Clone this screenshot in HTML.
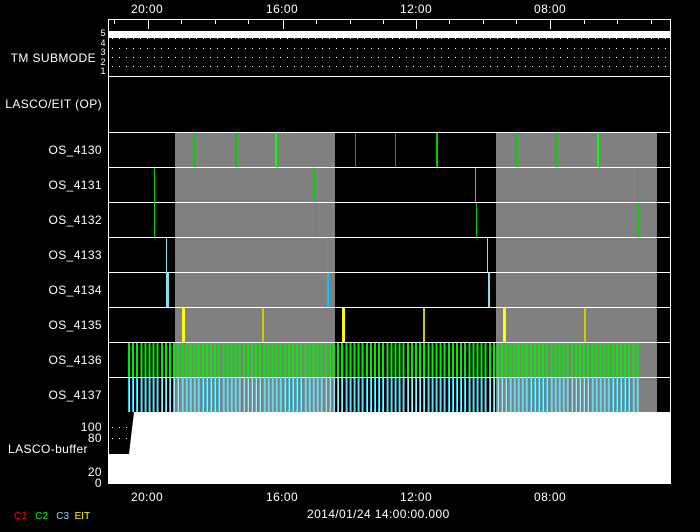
<!DOCTYPE html>
<html><head><meta charset="utf-8"><style>
body{margin:0;width:700px;height:532px;background:#000;position:relative;overflow:hidden;font-family:"Liberation Sans",sans-serif;color:#fff;font-size:12px}
div{position:absolute}
.h{height:1px;background:#fff;left:108px;width:563px}
.l{right:598px;text-align:right;white-space:nowrap;line-height:12px;letter-spacing:0.4px}
.v{width:1px}
.t{font-size:12px;line-height:12px;white-space:nowrap;letter-spacing:0.4px}
.dot{height:1px;background:repeating-linear-gradient(90deg,#fff 0 1px,transparent 1px 7px)}
</style></head><body>
<div style="left:108px;top:19px;width:1px;height:465px;background:#fff"></div>
<div style="left:670px;top:19px;width:1px;height:465px;background:#fff"></div>
<div class="h" style="top:19px"></div>
<div style="left:108px;top:19px;width:563px;height:10px">
<div style="left:6px;top:0;width:1px;height:5px;background:#fff"></div>
<div style="left:40px;top:0;width:1px;height:10px;background:#fff"></div>
<div style="left:73px;top:0;width:1px;height:5px;background:#fff"></div>
<div style="left:107px;top:0;width:1px;height:5px;background:#fff"></div>
<div style="left:140px;top:0;width:1px;height:5px;background:#fff"></div>
<div style="left:175px;top:0;width:1px;height:10px;background:#fff"></div>
<div style="left:208px;top:0;width:1px;height:5px;background:#fff"></div>
<div style="left:242px;top:0;width:1px;height:5px;background:#fff"></div>
<div style="left:275px;top:0;width:1px;height:5px;background:#fff"></div>
<div style="left:308px;top:0;width:1px;height:10px;background:#fff"></div>
<div style="left:341px;top:0;width:1px;height:5px;background:#fff"></div>
<div style="left:375px;top:0;width:1px;height:5px;background:#fff"></div>
<div style="left:408px;top:0;width:1px;height:5px;background:#fff"></div>
<div style="left:442px;top:0;width:1px;height:10px;background:#fff"></div>
<div style="left:476px;top:0;width:1px;height:5px;background:#fff"></div>
<div style="left:509px;top:0;width:1px;height:5px;background:#fff"></div>
<div style="left:543px;top:0;width:1px;height:5px;background:#fff"></div>
</div>
<div class="t" style="left:131px;top:3px">20:00</div>
<div class="t" style="left:266px;top:3px">16:00</div>
<div class="t" style="left:400px;top:3px">12:00</div>
<div class="t" style="left:534px;top:3px">08:00</div>
<div style="left:108px;top:31px;width:563px;height:7px;background:#fff"></div>
<div class="dot" style="left:112px;top:38px;width:555px"></div>
<div class="dot" style="left:112px;top:48px;width:555px"></div>
<div class="dot" style="left:112px;top:57px;width:555px"></div>
<div class="dot" style="left:112px;top:66px;width:555px"></div>
<div style="left:99px;top:29px;font-size:9px;line-height:9.5px;width:8px;text-align:center">5<br>4<br>3<br>2<br>1</div>
<div class="l" style="top:52px;right:604px">TM SUBMODE</div>
<div class="h" style="top:76px"></div>
<div class="l" style="top:98px">LASCO/EIT (OP)</div>
<div style="left:175px;top:132px;width:160px;height:280px;background:#808080"></div>
<div style="left:496px;top:132px;width:161px;height:280px;background:#808080"></div>
<div class="h" style="top:132px"></div>
<div class="h" style="top:167px"></div>
<div class="h" style="top:202px"></div>
<div class="h" style="top:237px"></div>
<div class="h" style="top:272px"></div>
<div class="h" style="top:307px"></div>
<div class="h" style="top:342px"></div>
<div class="h" style="top:377px"></div>
<div class="l" style="top:144px">OS_4130</div>
<div class="l" style="top:179px">OS_4131</div>
<div class="l" style="top:214px">OS_4132</div>
<div class="l" style="top:249px">OS_4133</div>
<div class="l" style="top:284px">OS_4134</div>
<div class="l" style="top:319px">OS_4135</div>
<div class="l" style="top:354px">OS_4136</div>
<div class="l" style="top:389px">OS_4137</div>
<div class="v" style="left:194px;top:133px;height:34px;background:#0c0"></div>
<div class="v" style="left:235px;top:133px;height:34px;width:2px;background:#0c0"></div>
<div class="v" style="left:275px;top:133px;height:34px;width:2px;background:#0f0"></div>
<div class="v" style="left:355px;top:133px;height:34px;background:#0a0"></div>
<div class="v" style="left:395px;top:133px;height:34px;background:#0a0"></div>
<div class="v" style="left:436px;top:133px;height:34px;width:2px;background:#0c0"></div>
<div class="v" style="left:516px;top:133px;height:34px;background:#0c0"></div>
<div class="v" style="left:556px;top:133px;height:34px;background:#0c0"></div>
<div class="v" style="left:597px;top:133px;height:34px;width:2px;background:#0f0"></div>
<div class="v" style="left:154px;top:168px;height:69px;background:#0c0"></div>
<div class="v" style="left:314px;top:168px;height:34px;background:#0c0"></div>
<div class="v" style="left:475px;top:168px;height:34px;background:#0f0"></div>
<div class="v" style="left:637px;top:168px;height:34px;background:#0c0"></div>
<div class="v" style="left:315px;top:203px;height:34px;background:#0c0"></div>
<div class="v" style="left:476px;top:203px;height:34px;background:#0c0"></div>
<div class="v" style="left:638px;top:203px;height:34px;background:#0c0"></div>
<div class="v" style="left:166px;top:238px;height:69px;background:#8de"></div>
<div class="v" style="left:167px;top:273px;height:34px;width:2px;background:#8de"></div>
<div class="v" style="left:327px;top:238px;height:34px;background:#0bd"></div>
<div class="v" style="left:327px;top:273px;height:34px;width:2px;background:#0cf"></div>
<div class="v" style="left:487px;top:238px;height:34px;background:#8de"></div>
<div class="v" style="left:488px;top:273px;height:34px;width:2px;background:#8de"></div>
<div class="v" style="left:182px;top:308px;height:34px;width:3px;background:#ff0"></div>
<div class="v" style="left:262px;top:308px;height:34px;width:2px;background:#cc0"></div>
<div class="v" style="left:342px;top:308px;height:34px;width:3px;background:#ff0"></div>
<div class="v" style="left:423px;top:308px;height:34px;width:2px;background:#cc0"></div>
<div class="v" style="left:503px;top:308px;height:34px;width:3px;background:#ff0"></div>
<div class="v" style="left:584px;top:308px;height:34px;width:2px;background:#cc0"></div>
<div style="left:128px;top:343px;width:512px;height:34px;background:repeating-linear-gradient(90deg,#0e0 0 2px,transparent 2px 4.1px)"></div>
<div style="left:128px;top:378px;width:512px;height:34px;background:repeating-linear-gradient(90deg,#2ce 0 1px,#9ef 1px 2px,transparent 2px 4.1px)"></div>
<div style="left:108px;top:412px;width:563px;height:72px;background:#fff"></div>
<div style="left:109px;top:412px;width:25px;height:42px;background:#000;clip-path:polygon(0 0,100% 0,80% 100%,0 100%)"></div>
<div class="dot" style="left:112px;top:427px;width:18px"></div>
<div class="dot" style="left:112px;top:438px;width:18px"></div>
<div class="l" style="top:421px">100</div>
<div class="l" style="top:432px">80</div>
<div style="left:8px;top:443px;line-height:12px;letter-spacing:0.4px">LASCO-buffer</div>
<div class="l" style="top:466px">20</div>
<div class="l" style="top:477px">0</div>
<div class="t" style="left:131px;top:491px">20:00</div>
<div class="t" style="left:266px;top:491px">16:00</div>
<div class="t" style="left:400px;top:491px">12:00</div>
<div class="t" style="left:534px;top:491px">08:00</div>
<div class="t" style="left:307px;top:508px">2014/01/24 14:00:00.000</div>
<div style="left:14px;top:511px;font-size:10px;line-height:11px;white-space:nowrap"><span style="color:#f00">C1</span>&nbsp;&nbsp;&nbsp;<span style="color:#0f0">C2</span>&nbsp;&nbsp;&nbsp;<span style="color:#8de">C3</span>&nbsp;&nbsp;<span style="color:#ff0">EIT</span></div>
</body></html>
